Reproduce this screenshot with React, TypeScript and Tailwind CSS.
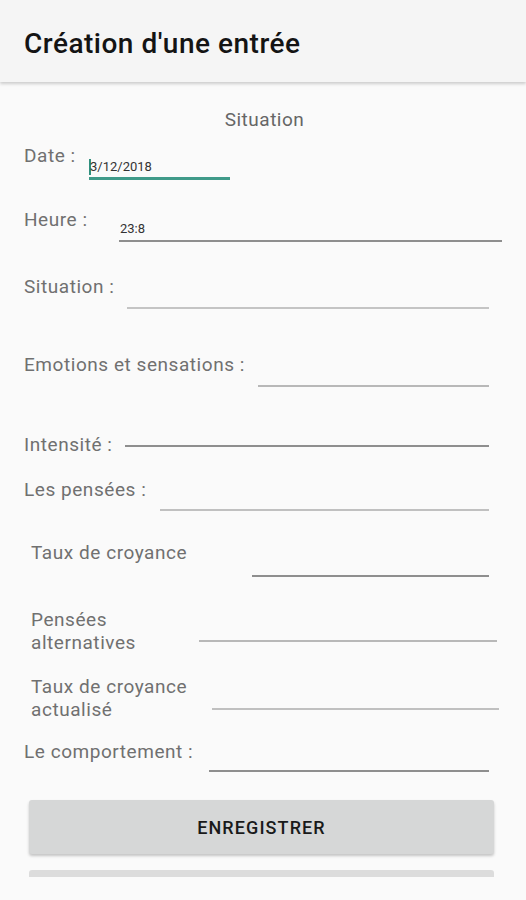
const font = { fontFamily: "Roboto, 'Noto Sans', sans-serif" };

type Row = {
  label: React.ReactNode;
  row: string;
  labelBox: string;
  field: string;
  value?: string;
  cursor?: boolean;
};

const rows: Row[] = [
  {
    label: "Date :",
    row: "h-[64px]",
    labelBox: "w-[65px]",
    field: "mt-[12px] h-[24px] w-[141px] border-b-[3px] border-[#3f9a89]",
    value: "3/12/2018",
    cursor: true,
  },
  {
    label: "Heure :",
    row: "h-[67px]",
    labelBox: "w-[95px]",
    field: "mt-[10px] h-[24px] w-[383px] border-b-2 border-[#8e8e8e]",
    value: "23:8",
  },
  {
    label: "Situation :",
    row: "h-[78px]",
    labelBox: "w-[103px]",
    field: "mt-[14px] h-[20px] w-[362px] border-b-2 border-[#c4c4c4]",
  },
  {
    label: "Emotions et sensations :",
    row: "h-[80px]",
    labelBox: "w-[234px]",
    field: "mt-[14px] h-[20px] w-[231px] border-b-2 border-[#b8b8b8]",
  },
  {
    label: "Intensité :",
    row: "h-[45px]",
    labelBox: "w-[101px]",
    field: "mt-0 h-[14px] w-[364px] border-b-2 border-[#8e8e8e]",
  },
  {
    label: "Les pensées :",
    row: "h-[63px]",
    labelBox: "w-[136px]",
    field: "mt-[13px] h-[20px] w-[329px] border-b-2 border-[#c0c0c0]",
  },
  {
    label: "Taux de croyance",
    row: "h-[67px]",
    labelBox: "w-[228px] pl-[7px]",
    field: "mt-[16px] h-[20px] w-[237px] border-b-2 border-[#8e8e8e]",
  },
  {
    label: (
      <>
        Pensées
        <br />
        alternatives
      </>
    ),
    row: "h-[67px]",
    labelBox: "w-[175px] pl-[7px] leading-[23px]",
    field: "mt-[14px] h-[20px] w-[298px] border-b-2 border-[#b8b8b8]",
  },
  {
    label: (
      <>
        Taux de croyance
        <br />
        actualisé
      </>
    ),
    row: "h-[65px]",
    labelBox: "w-[188px] pl-[7px] leading-[23px]",
    field: "mt-[15px] h-[20px] w-[287px] border-b-2 border-[#c0c0c0]",
  },
  {
    label: "Le comportement :",
    row: "h-[60px]",
    labelBox: "w-[185px]",
    field: "mt-[12px] h-[20px] w-[280px] border-b-2 border-[#8e8e8e]",
  },
];

function Header() {
  return (
    <div className="h-[82px] bg-[#f5f5f5] shadow-[0_2px_3px_rgba(0,0,0,0.18)] relative z-10 flex items-center px-6 pt-[5px]">
      <h1 className="text-[28px] tracking-[0.5px] font-medium text-[#141414] leading-none">
        Création d'une entrée
      </h1>
    </div>
  );
}

function FormRow({ r }: { r: Row }) {
  return (
    <div className={`flex items-start pl-6 ${r.row}`}>
      <div className={`shrink-0 whitespace-nowrap text-[19px] tracking-[0.55px] leading-6 text-[#707070] ${r.labelBox}`}>
        {r.label}
      </div>
      <div className={`shrink-0 flex items-center ${r.field}`}>
        {r.cursor && <span className="w-[2px] h-[16px] bg-[#2f8f7d]" />}
        {r.value && (
          <span className={`text-[13px] text-[#333] ${r.cursor ? "-ml-[1px]" : "ml-[1px]"}`}>
            {r.value}
          </span>
        )}
      </div>
    </div>
  );
}

export default function App() {
  return (
    <div className="w-[526px] h-[900px] bg-[#fafafa] overflow-hidden" style={font}>
      <Header />
      <div className="pt-[26px] text-center text-[19px] tracking-[0.5px] leading-6 text-[#666] pl-[3px]">
        Situation
      </div>
      <div className="pt-[12px]">
        {rows.map((r, i) => (
          <FormRow key={i} r={r} />
        ))}
      </div>
      <div className="px-[29px] w-[523px]">
        <button className="w-full h-[54px] rounded-[3px] bg-[#d6d7d7] shadow-[0_2px_3px_rgba(0,0,0,0.22)] text-[18px] font-medium text-[#1a1a1a] tracking-[1.1px]">
          ENREGISTRER
        </button>
        <div className="mt-[16px] h-[7px] rounded-t-[3px] bg-[#dcdcdc]" />
      </div>
    </div>
  );
}
